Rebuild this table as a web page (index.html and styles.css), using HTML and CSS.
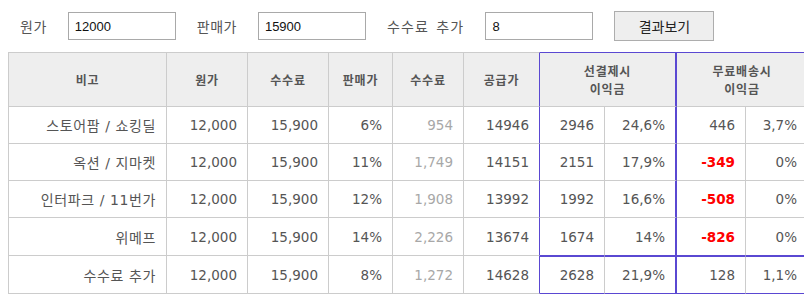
FILE: index.html
```html
<!DOCTYPE html>
<html lang="ko">
<head>
<meta charset="utf-8">
<title>수수료 계산기</title>
<link rel="stylesheet" href="styles.css">
</head>
<body>
<div class="toolbar">
  <label class="lbl" for="cost">원가</label>
  <input class="field" id="cost" type="text" value="12000">
  <label class="lbl" for="price">판매가</label>
  <input class="field" id="price" type="text" value="15900">
  <label class="lbl wide" for="extra">수수료 추가</label>
  <input class="field" id="extra" type="text" value="8">
  <button class="btn" type="button">결과보기</button>
</div>

<table class="calc">
  <colgroup>
    <col class="c1"><col class="c2"><col class="c3"><col class="c4"><col class="c5">
    <col class="c6"><col class="c7"><col class="c8"><col class="c9"><col class="c10">
  </colgroup>
  <thead>
    <tr>
      <th class="first">비고</th>
      <th>원가</th>
      <th>수수료</th>
      <th>판매가</th>
      <th>수수료</th>
      <th class="pr">공급가</th>
      <th colspan="2" class="pt pr2">선결제시<br>이익금</th>
      <th colspan="2" class="pt pr">무료배송시<br>이익금</th>
    </tr>
  </thead>
  <tbody>
    <tr>
      <td class="first">스토어팜 / 쇼킹딜</td>
      <td>12,000</td><td>15,900</td><td>6%</td><td class="fee">954</td>
      <td class="pr">14946</td><td>2946</td><td class="pr2">24,6%</td><td>446</td><td class="pr">3,7%</td>
    </tr>
    <tr>
      <td class="first">옥션 / 지마켓</td>
      <td>12,000</td><td>15,900</td><td>11%</td><td class="fee">1,749</td>
      <td class="pr">14151</td><td>2151</td><td class="pr2">17,9%</td><td class="neg">-349</td><td class="pr">0%</td>
    </tr>
    <tr>
      <td class="first">인터파크 / 11번가</td>
      <td>12,000</td><td>15,900</td><td>12%</td><td class="fee">1,908</td>
      <td class="pr">13992</td><td>1992</td><td class="pr2">16,6%</td><td class="neg">-508</td><td class="pr">0%</td>
    </tr>
    <tr class="tall">
      <td class="first">위메프</td>
      <td>12,000</td><td>15,900</td><td>14%</td><td class="fee">2,226</td>
      <td class="pr">13674</td><td class="pb">1674</td><td class="pb pr2">14%</td><td class="pb neg">-826</td><td class="pb pr">0%</td>
    </tr>
    <tr class="tall">
      <td class="first">수수료 추가</td>
      <td>12,000</td><td>15,900</td><td>8%</td><td class="fee">1,272</td>
      <td class="pr">14628</td><td class="pb ptop">2628</td><td class="pb ptop pr2">21,9%</td><td class="pb ptop">128</td><td class="pb ptop pr">1,1%</td>
    </tr>
  </tbody>
</table>
</body>
</html>
```

FILE: styles.css
```css
body {
  margin: 8px;
  background: #ffffff;
  font-family: "DejaVu Sans", "Noto Sans CJK KR", sans-serif;
  color: #555;
}

.toolbar {
  display: flex;
  align-items: center;
  gap: 21px;
  height: 30px;
  margin: 3px 0 11px;
  padding-left: 12px;
}

.lbl {
  font-family: "Noto Sans CJK KR", sans-serif;
  font-size: 14px;
  color: #555;
  letter-spacing: 0.5px;
}

.lbl.wide {
  word-spacing: 2px;
  letter-spacing: 1.2px;
}

.field {
  box-sizing: border-box;
  width: 108px;
  height: 28px;
  border: 1px solid #a9a9a9;
  padding: 0 6px;
  font-family: "Liberation Sans", sans-serif;
  font-size: 13px;
  color: #111;
  background: #fff;
}

.btn {
  box-sizing: border-box;
  width: 100px;
  height: 30px;
  border: 1px solid #adadad;
  background: #eeeeee;
  font-family: "Noto Sans CJK KR", sans-serif;
  font-size: 14px;
  color: #222;
  padding: 0;
}

.calc {
  box-sizing: border-box;
  border-collapse: separate;
  border-spacing: 0;
  table-layout: fixed;
  width: 800px;
}

.c1 { width: 159px; }
.c2 { width: 81px; }
.c3 { width: 81px; }
.c4 { width: 64px; }
.c5 { width: 71px; }
.c6 { width: 76px; }
.c7 { width: 65px; }
.c8 { width: 72px; }
.c9 { width: 69px; }
.c10 { width: 62px; }

.calc th,
.calc td {
  box-sizing: border-box;
  border-right: 1px solid #cccccc;
  border-bottom: 1px solid #cccccc;
  padding: 0 10px 0 0;
}

.calc th {
  height: 55px;
  border-top: 1px solid #cccccc;
  background: #eeeeee;
  font-family: "Noto Sans CJK KR", sans-serif;
  font-size: 12px;
  font-weight: bold;
  line-height: 18px;
  color: #555;
  text-align: center;
  padding: 0;
  letter-spacing: 0.8px;
}

.calc td {
  height: 37px;
  font-size: 13.5px;
  text-align: right;
  color: #555;
  white-space: nowrap;
}

.calc td.first {
  font-size: 14px;
  letter-spacing: 0.6px;
}

.calc tr.tall td {
  height: 38px;
}

.calc .first {
  border-left: 1px solid #cccccc;
}

.calc td.fee {
  color: #a8a8a8;
}

.calc td.neg {
  color: #ff0000;
  font-weight: bold;
}

.calc .pr {
  border-right: 1px solid #5a48d2;
}

.calc .pr2 {
  border-right: 2px solid #5a48d2;
}

.calc th.pt {
  border-top: 1px solid #5a48d2;
}

.calc td.pb {
  border-bottom: 1px solid #5a48d2;
}

.calc td.ptop {
  border-top: 1px solid #5a48d2;
}
```
